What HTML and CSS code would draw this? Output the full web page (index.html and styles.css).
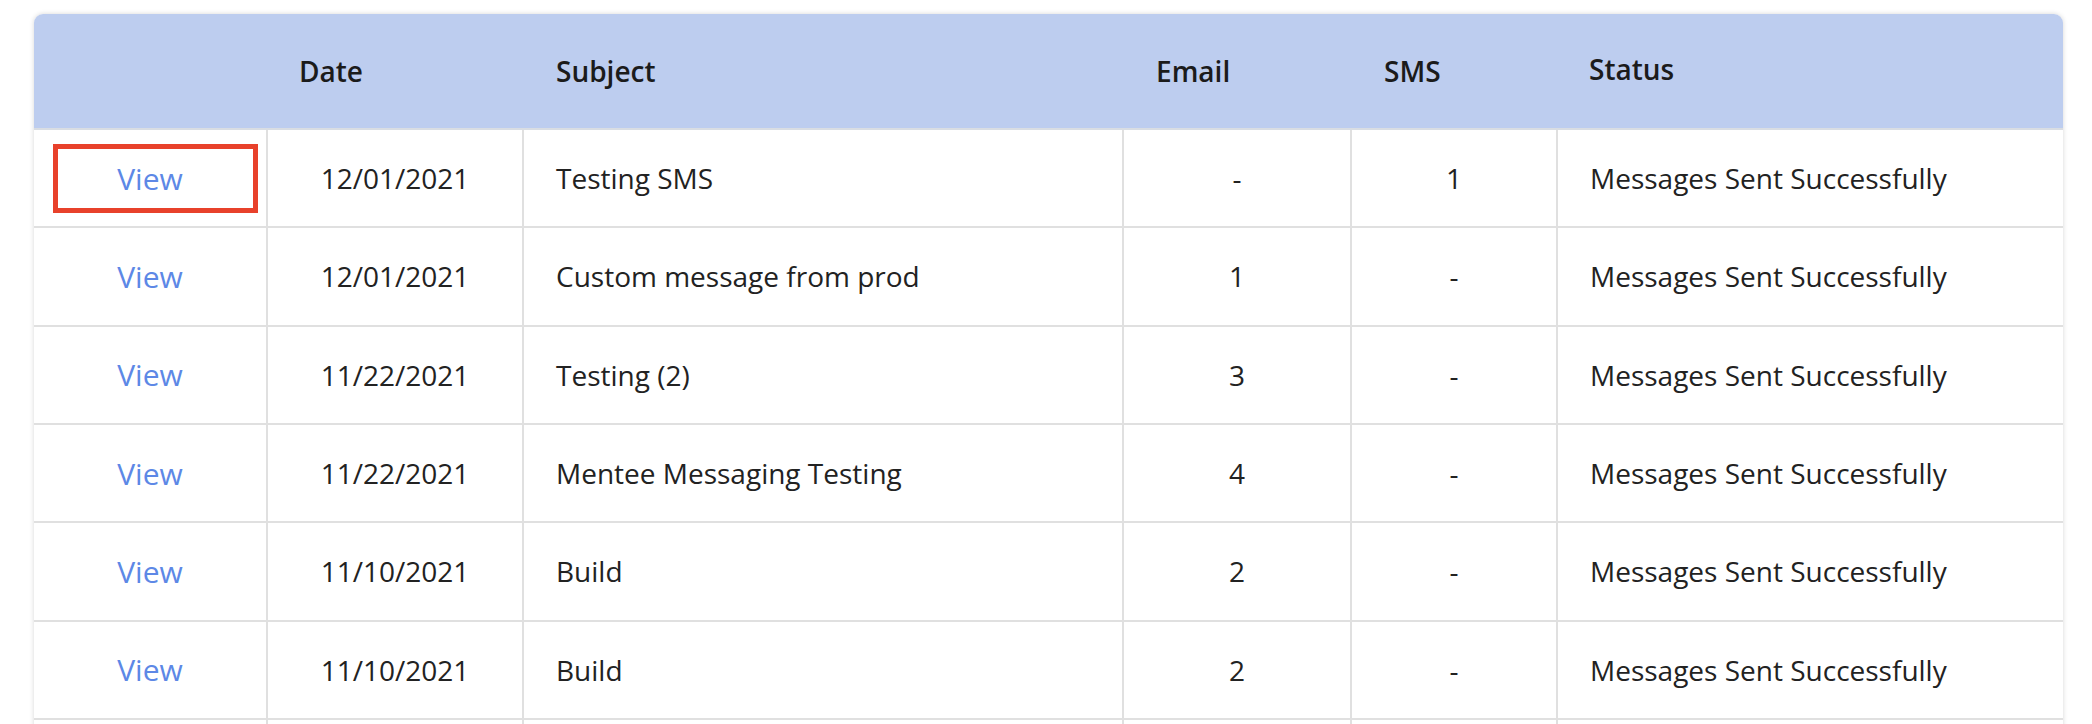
FILE: index.html
```html
<!DOCTYPE html>
<html lang="en">
<head>
<meta charset="utf-8">
<title>Messages</title>
<link rel="stylesheet" href="styles.css">
</head>
<body>
<div class="card">
  <table class="messages">
    <colgroup>
      <col class="c-view"><col class="c-date"><col class="c-subject"><col class="c-email"><col class="c-sms"><col class="c-status">
    </colgroup>
    <thead>
      <tr>
        <th></th>
        <th>Date</th>
        <th>Subject</th>
        <th>Email</th>
        <th>SMS</th>
        <th class="th-status">Status</th>
      </tr>
    </thead>
    <tbody>
      <tr>
        <td class="center view-cell"><a class="view" href="#">View</a><span class="highlight"></span></td>
        <td class="center">12/01/2021</td>
        <td class="left">Testing SMS</td>
        <td class="center">-</td>
        <td class="center">1</td>
        <td class="left">Messages Sent Successfully</td>
      </tr>
      <tr>
        <td class="center"><a class="view" href="#">View</a></td>
        <td class="center">12/01/2021</td>
        <td class="left">Custom message from prod</td>
        <td class="center">1</td>
        <td class="center">-</td>
        <td class="left">Messages Sent Successfully</td>
      </tr>
      <tr>
        <td class="center"><a class="view" href="#">View</a></td>
        <td class="center">11/22/2021</td>
        <td class="left">Testing (2)</td>
        <td class="center">3</td>
        <td class="center">-</td>
        <td class="left">Messages Sent Successfully</td>
      </tr>
      <tr>
        <td class="center"><a class="view" href="#">View</a></td>
        <td class="center">11/22/2021</td>
        <td class="left">Mentee Messaging Testing</td>
        <td class="center">4</td>
        <td class="center">-</td>
        <td class="left">Messages Sent Successfully</td>
      </tr>
      <tr>
        <td class="center"><a class="view" href="#">View</a></td>
        <td class="center">11/10/2021</td>
        <td class="left">Build</td>
        <td class="center">2</td>
        <td class="center">-</td>
        <td class="left">Messages Sent Successfully</td>
      </tr>
      <tr>
        <td class="center"><a class="view" href="#">View</a></td>
        <td class="center">11/10/2021</td>
        <td class="left">Build</td>
        <td class="center">2</td>
        <td class="center">-</td>
        <td class="left">Messages Sent Successfully</td>
      </tr>
      <tr class="row-more">
        <td></td>
        <td></td>
        <td></td>
        <td></td>
        <td></td>
        <td></td>
      </tr>
    </tbody>
  </table>
</div>
</body>
</html>
```
FILE: styles.css
```css
html, body {
  margin: 0;
  padding: 0;
  background: #ffffff;
}
body {
  font-family: "Open Sans", "Noto Sans", sans-serif;
  color: #222222;
  padding: 14px 0 0 34px;
}
.card {
  width: 2029px;
  border-radius: 9px 9px 0 0;
  overflow: hidden;
  box-shadow: 0 0 5px rgba(0, 0, 0, 0.16);
  background: #ffffff;
}
.messages {
  width: 2029px;
  table-layout: fixed;
  border-collapse: separate;
  border-spacing: 0;
  font-size: 28px;
}
.c-view { width: 234px; }
.c-date { width: 256px; }
.c-subject { width: 600px; }
.c-email { width: 228px; }
.c-sms { width: 206px; }
.c-status { width: 505px; }

.messages th {
  background: #bdcdef;
  height: 116px;
  padding: 0 0 0 32px;
  text-align: left;
  font-weight: 600;
  color: #1b1b1b;
  border-bottom: 2px solid #d9dde3;
  box-sizing: border-box;
}
.messages th:nth-child(2) {
  padding-left: 31px;
}
.messages th.th-status {
  padding-left: 31px;
  padding-bottom: 5px;
}
.messages td {
  height: 98.33px;
  padding: 0;
  border-bottom: 2px solid #e0e0e0;
  border-right: 2px solid #e0e0e0;
  box-sizing: border-box;
  vertical-align: middle;
  color: #222222;
}
.messages td:last-child {
  border-right: none;
}
.messages td.center {
  text-align: center;
}
.messages td.left {
  padding-left: 32px;
}
.view {
  color: #5d88e6;
  font-size: 30px;
  text-decoration: none;
}
.view-cell {
  position: relative;
}
.highlight {
  position: absolute;
  left: 19px;
  right: 8px;
  top: 14px;
  bottom: 13px;
  border: 5px solid #e8412b;
  pointer-events: none;
}
```
